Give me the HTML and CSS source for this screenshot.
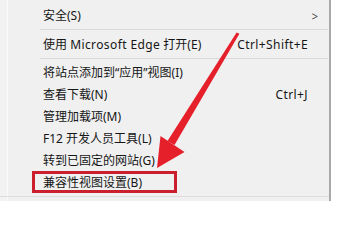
FILE: index.html
```html
<!DOCTYPE html>
<html lang="zh-CN">
<head>
<meta charset="utf-8">
<link rel="stylesheet" href="styles.css">
</head>
<body>
<div class="page">
  <div class="menu">
    <div class="gutter"></div>
    <div class="list">
      <div class="item"><span class="label">安全(S)</span><span class="sub">&gt;</span></div>
      <div class="sep"></div>
      <div class="item"><span class="label">使用 <span class="latin">Microsoft Edge</span> 打开(E)</span><span class="key">Ctrl+Shift+E</span></div>
      <div class="sep"></div>
      <div class="item"><span class="label">将站点添加到“应用”视图(I)</span></div>
      <div class="item"><span class="label">查看下载(N)</span><span class="key">Ctrl+J</span></div>
      <div class="item"><span class="label">管理加载项(M)</span></div>
      <div class="item"><span class="label">F12 开发人员工具(L)</span></div>
      <div class="item"><span class="label">转到已固定的网站(G)</span></div>
      <div class="item"><span class="label">兼容性视图设置(B)</span></div>
      <div class="bottom-line"></div>
    </div>
  </div>
  <div class="outside"></div>
  <div class="highlight"></div>
  <svg class="arrow" width="357" height="201" viewBox="0 0 357 201">
    <polygon points="236.6,32.4 239.4,33.8 174.5,145 167.5,141" fill="#e5202b"/>
    <polygon points="157,168 160.5,136 184.5,152" fill="#e5202b"/>
  </svg>
</div>
</body>
</html>
```

FILE: styles.css
```css
html, body {
  margin: 0;
  padding: 0;
  background: #ffffff;
}
.page {
  position: relative;
  width: 357px;
  height: 201px;
  display: flex;
  overflow: hidden;
}
.menu {
  width: 329px;
  height: 201px;
  background: #f0f0f0;
  border-right: 2px solid #a9a9a9;
  box-shadow: 1px 0 0 #d4d4d4;
  display: flex;
  font-family: "Noto Sans", "Noto Sans CJK SC", sans-serif;
  font-size: 12px;
  color: #161616;
}
.gutter {
  width: 7px;
  border-right: 1px solid #fafafa;
  background: #f2f2f2;
  flex: none;
}
.list {
  flex: 1;
  padding-top: 4px;
  display: flex;
  flex-direction: column;
}
.item {
  height: 22px;
  display: flex;
  align-items: center;
  padding-left: 35px;
  padding-right: 21px;
  white-space: nowrap;
}
.label {
  flex: 1;
}
.latin {
  letter-spacing: 0.4px;
}
.key {
  letter-spacing: 0.4px;
}
.sub {
  margin-right: -10px;
  font-size: 11px;
  color: #444;
  transform: scaleY(1.15);
}
.sep {
  height: 1px;
  background: #d9d9d9;
  margin: 3px 1px 3px 32px;
  flex: none;
}
.sep + .item + .sep {
  margin-bottom: 2px;
}
.bottom-line {
  height: 1px;
  background: #dcdcdc;
  margin-top: 3px;
  margin-left: -8px;
}
.outside {
  flex: 1;
  background: #ffffff;
}
.highlight {
  position: absolute;
  left: 32px;
  top: 171px;
  width: 145px;
  height: 22px;
  box-sizing: border-box;
  border: 3px solid #cc1f2d;
}
.arrow {
  position: absolute;
  left: 0;
  top: 0;
}
```
